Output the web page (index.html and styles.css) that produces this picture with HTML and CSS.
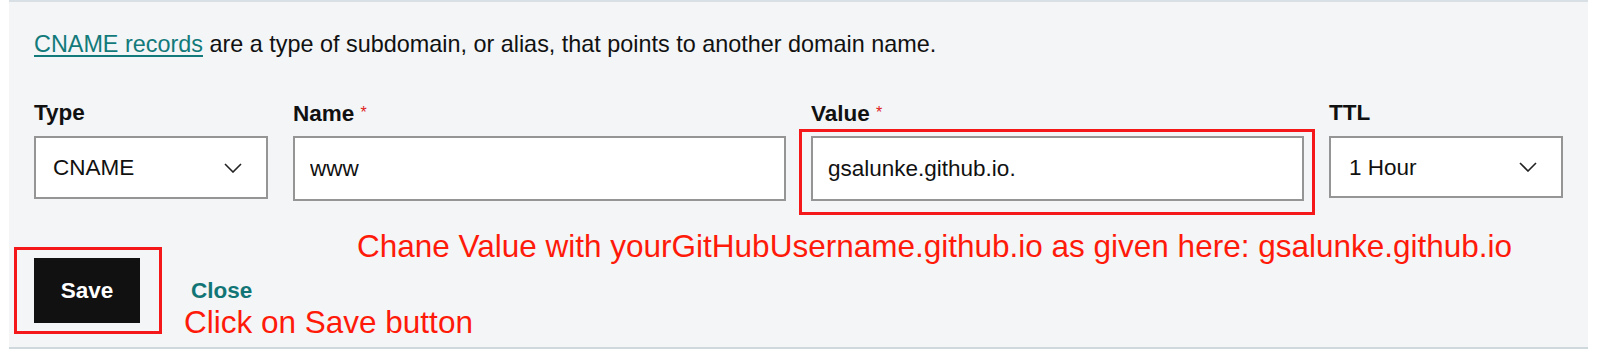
FILE: index.html
```html
<!DOCTYPE html>
<html lang="en">
<head>
    <meta charset="UTF-8">
    <meta name="viewport" content="width=device-width, initial-scale=1.0">
    <title>CNAME record</title>
    <link rel="stylesheet" href="styles.css">
</head>
<body>
    <div class="panel">
        <p class="intro"><a href="#">CNAME records</a> are a type of subdomain, or alias, that points to another domain name.</p>

        <form class="record-form">
            <div class="field">
                <label for="type">Type</label>
                <div class="select-box">
                    <span>CNAME</span>
                    <svg class="chevron" viewBox="0 0 18 10" width="18" height="10"><path d="M1 1l8 8 8-8" fill="none" stroke="#222" stroke-width="1.6"/></svg>
                </div>
            </div>

            <div class="field">
                <label for="name">Name <span class="req">*</span></label>
                <input type="text" id="name" value="www">
            </div>

            <div class="field">
                <label for="value">Value <span class="req">*</span></label>
                <div class="highlight-wrap">
                    <input type="text" id="value" value="gsalunke.github.io.">
                    <div class="red-box value-box"></div>
                </div>
            </div>

            <div class="field">
                <label for="ttl">TTL</label>
                <div class="select-box ttl">
                    <span>1 Hour</span>
                    <svg class="chevron" viewBox="0 0 18 10" width="18" height="10"><path d="M1 1l8 8 8-8" fill="none" stroke="#222" stroke-width="1.6"/></svg>
                </div>
            </div>
        </form>

        <div class="actions">
            <div class="save-wrap">
                <button type="button" class="save">Save</button>
                <div class="red-box save-box"></div>
            </div>
            <a href="#" class="close">Close</a>
        </div>

        <div class="note note-value">Chane Value with yourGitHubUsername.github.io as given here: gsalunke.github.io</div>
        <div class="note note-save">Click on Save button</div>
    </div>
</body>
</html>
```

FILE: styles.css
```css
body {
    margin: 0;
    font-family: 'Liberation Sans', Arial, sans-serif;
    background: #fff;
    color: #111;
}

.panel {
    position: relative;
    margin-left: 9px;
    width: 1579px;
    background: #f3f5f7;
    border-top: 2px solid #d8e0e5;
    border-bottom: 2px solid #cfd8dd;
    padding: 29px 0 24px 25px;
    box-sizing: border-box;
    font-size: 22.5px;
    line-height: 27px;
}

.intro {
    margin: 0;
    font-size: 23.4px;
}

.intro a {
    color: #127a7a;
    text-decoration: underline;
    text-underline-offset: 3px;
}

.record-form {
    display: grid;
    grid-template-columns: 234px 493px 493px 234px;
    column-gap: 25px;
    margin-top: 41px;
}

.field label {
    display: block;
    font-weight: bold;
    margin-bottom: 10px;
}

.req {
    color: #e0201b;
    font-size: 16px;
    vertical-align: 3px;
    font-weight: normal;
}

.select-box,
.field input {
    height: 63px;
    box-sizing: border-box;
    border: 2px solid #959595;
    background: #fff;
    font-family: inherit;
    font-size: 22.5px;
    color: #111;
}

.select-box {
    display: flex;
    align-items: center;
    justify-content: space-between;
    padding: 0 24px 0 17px;
}

.select-box.ttl {
    height: 62px;
    margin-top: 2px;
    padding-left: 18px;
}

.field input {
    width: 100%;
    height: 65px;
    margin-top: -1px;
    padding: 0 15px;
    outline: none;
}

.highlight-wrap,
.save-wrap {
    position: relative;
}

/* red annotation frames drawn over the screenshot */
.red-box {
    position: absolute;
    border: 3px solid #f4181b;
    pointer-events: none;
}

.value-box {
    left: -12px;
    right: -11px;
    top: -8px;
    bottom: -14px;
}

.save-box {
    left: -20px;
    right: -22px;
    top: -11px;
    bottom: -11px;
}

.actions {
    display: flex;
    align-items: center;
    margin-top: 57px;
}

.save {
    width: 106px;
    height: 65px;
    border: none;
    background: #111;
    color: #fff;
    font-family: inherit;
    font-size: 22.5px;
    font-weight: bold;
    display: block;
}

.close {
    margin-left: 51px;
    color: #127575;
    font-weight: bold;
    text-decoration: none;
}

.note {
    position: absolute;
    color: #ff1a0a;
    font-size: 31.5px;
    line-height: 36px;
    white-space: nowrap;
}

.note-value {
    left: 348px;
    top: 226px;
}

.note-save {
    left: 175px;
    top: 302px;
}
```
